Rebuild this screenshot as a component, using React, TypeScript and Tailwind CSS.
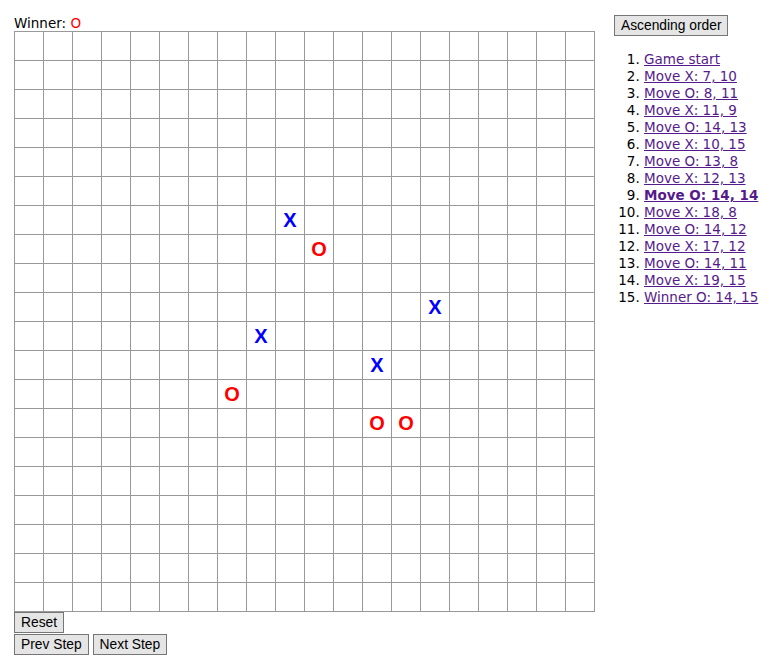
import React from "react";

const SIZE = 20;

type Move = { player: "X" | "O"; row: number; col: number };

const moves: Move[] = [
  { player: "X", row: 7, col: 10 },
  { player: "O", row: 8, col: 11 },
  { player: "X", row: 11, col: 9 },
  { player: "O", row: 14, col: 13 },
  { player: "X", row: 10, col: 15 },
  { player: "O", row: 13, col: 8 },
  { player: "X", row: 12, col: 13 },
  { player: "O", row: 14, col: 14 },
  { player: "X", row: 18, col: 8 },
  { player: "O", row: 14, col: 12 },
  { player: "X", row: 17, col: 12 },
  { player: "O", row: 14, col: 11 },
  { player: "X", row: 19, col: 15 },
  { player: "O", row: 14, col: 15 },
];

// step currently shown on the board (history item 9)
const currentStep = 8;

const btn =
  "border border-[#767676] bg-[#e5e5e5] px-[6px] py-[2px] text-[13.8px] leading-[15px] text-black font-['Liberation_Sans',Arial,sans-serif]";

const App: React.FC = () => {
  const board: (string | null)[][] = Array.from({ length: SIZE }, () =>
    Array(SIZE).fill(null)
  );
  moves.slice(0, currentStep).forEach((m) => {
    board[m.row - 1][m.col - 1] = m.player;
  });

  const history = [
    "Game start",
    ...moves.map((m, i) =>
      i === moves.length - 1
        ? `Winner ${m.player}: ${m.row}, ${m.col}`
        : `Move ${m.player}: ${m.row}, ${m.col}`
    ),
  ];

  return (
    <div className="flex bg-white pl-[14px] pt-[16px] min-h-[668px] font-['DejaVu_Sans',sans-serif] text-[13.5px] text-black">
      <div className="flex flex-col">
        <div className="leading-[15px] h-[15px]">
          Winner: <span className="text-[#ff0000]">O</span>
        </div>
        <div className="grid grid-cols-[repeat(20,28px)] gap-px bg-[#999999] p-px w-[581px]">
          {board.flat().map((cell, i) => (
            <div
              key={i}
              className={`h-[28px] bg-white flex items-center justify-center text-[20px] font-bold font-['Liberation_Sans',Arial,sans-serif] ${
                cell === "X" ? "text-[#0000ff]" : "text-[#ff0000]"
              }`}
            >
              {cell}
            </div>
          ))}
        </div>
        <div className="flex flex-col items-start gap-px">
          <button className={btn}>Reset</button>
          <div className="flex gap-[4px]">
            <button className={btn}>Prev Step</button>
            <button className={btn}>Next Step</button>
          </div>
        </div>
      </div>
      <div className="ml-[19px] -mt-px flex flex-col items-start">
        <button className={btn}>Ascending order</button>
        <ol className="list-decimal pl-[30px] mt-[15px] leading-[17px]">
          {history.map((h, i) => (
            <li key={i}>
              <a
                href="#"
                className={`underline text-[#551a8b] ${
                  i === currentStep ? "font-bold" : ""
                }`}
              >
                {h}
              </a>
            </li>
          ))}
        </ol>
      </div>
    </div>
  );
};

export default App;
